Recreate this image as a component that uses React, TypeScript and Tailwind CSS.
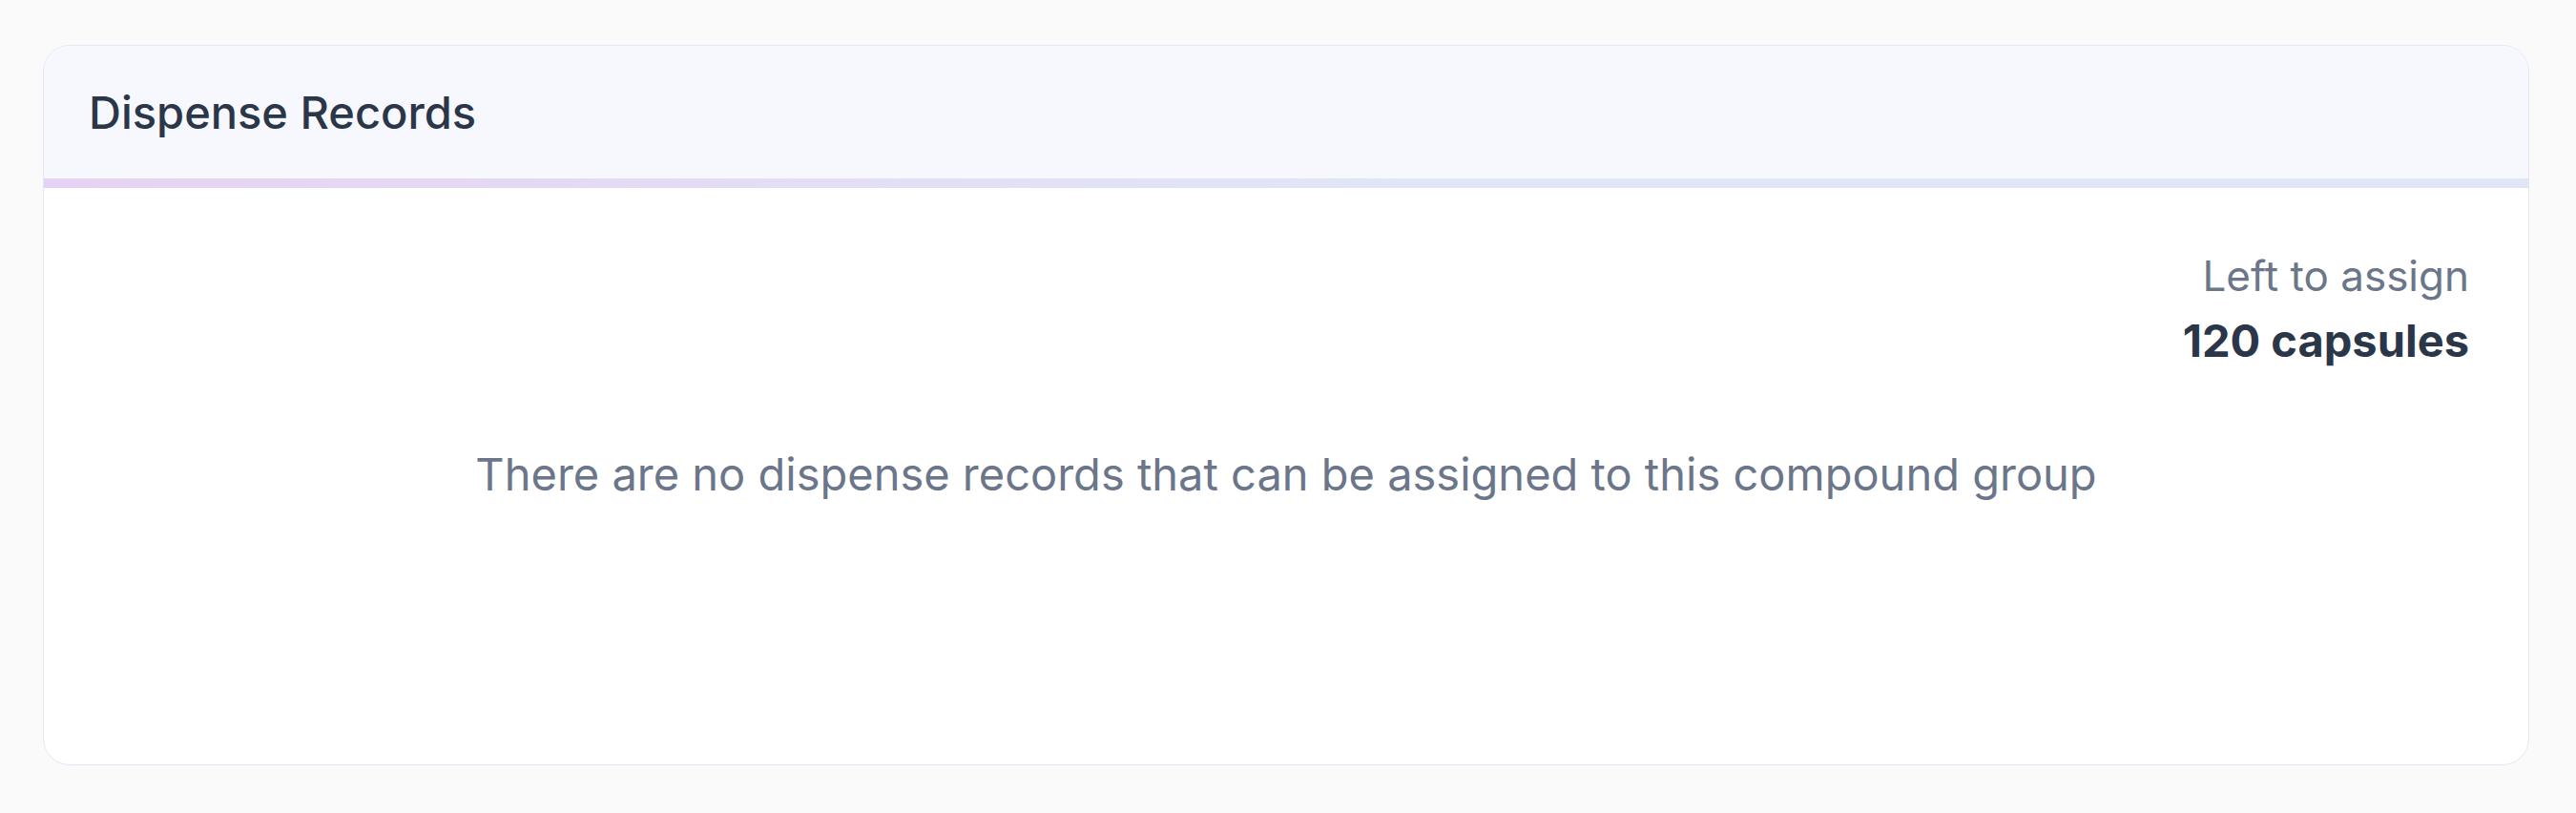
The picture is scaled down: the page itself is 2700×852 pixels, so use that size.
import React from "react";

const DispenseRecords: React.FC<{ leftToAssign: number; unit: string }> = ({
  leftToAssign,
  unit,
}) => {
  return (
    <div className="overflow-hidden rounded-[28px] border border-[#e3e7f4] bg-white">
      {/* Header */}
      <div className="flex h-[139px] items-center bg-[#f7f8fe] px-[47px]">
        <h2 className="text-[47px] leading-[60px] font-medium text-[#2b3649]">
          Dispense Records
        </h2>
      </div>
      <div className="h-[10px] bg-linear-to-r from-[#e6d2f4] to-[#e0e6f6] to-55%" />

      {/* Body */}
      <div className="px-[62px] pt-[64px] pb-[274px]">
        <div className="flex flex-col items-end">
          <span className="text-[44px] leading-[56px] text-[#6b768a]">
            Left to assign
          </span>
          <span className="mt-[10px] text-[47px] leading-[60px] font-bold text-[#2b3649]">
            {leftToAssign} {unit}
          </span>
        </div>
        <p className="mt-[80px] text-center text-[47px] leading-[60px] text-[#6b768a]">
          There are no dispense records that can be assigned to this compound
          group
        </p>
      </div>
    </div>
  );
};

export default function App() {
  return (
    <div
      className="min-h-screen bg-[#fafafa] pt-[47px] pr-[49px] pb-[48px] pl-[45px]"
      style={{ fontFamily: "Inter, 'Noto Sans', sans-serif" }}
    >
      <DispenseRecords leftToAssign={120} unit="capsules" />
    </div>
  );
}
